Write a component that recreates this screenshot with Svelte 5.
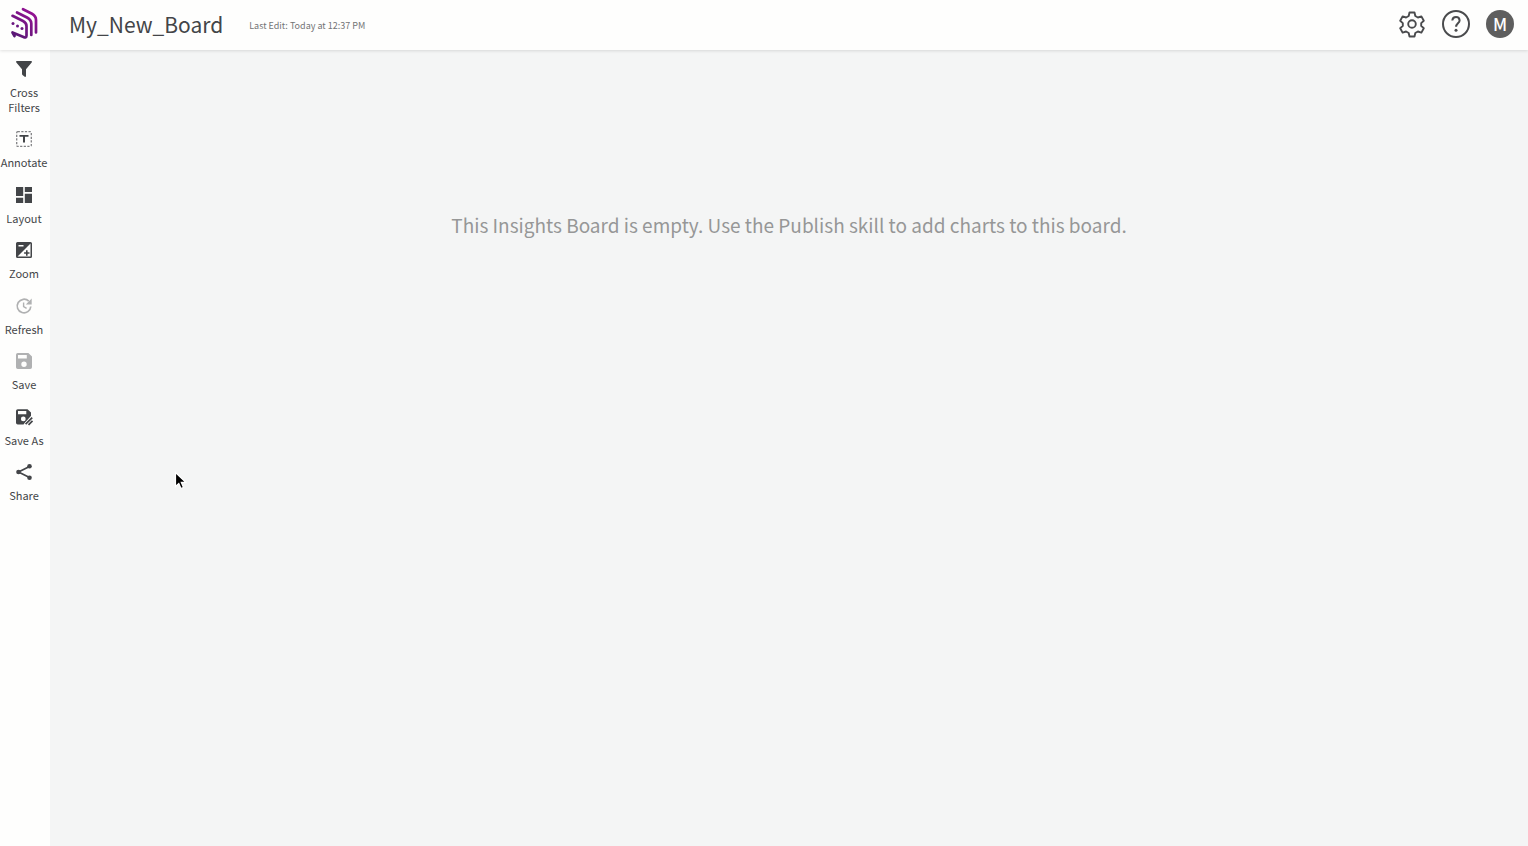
<script lang="ts">
  type Tool = { id: string; label: string; muted?: boolean }

  const tools: Tool[] = [
    { id: 'filter', label: 'Cross Filters' },
    { id: 'annotate', label: 'Annotate' },
    { id: 'layout', label: 'Layout' },
    { id: 'zoom', label: 'Zoom' },
    { id: 'refresh', label: 'Refresh', muted: true },
    { id: 'save', label: 'Save', muted: true },
    { id: 'saveas', label: 'Save As' },
    { id: 'share', label: 'Share' },
  ]
</script>

<div class="app">
  <header>
    <a class="logo" href="/" aria-label="Home">
      <svg viewBox="0 0 30 34" width="30" height="34" fill="none" stroke-width="2.7" stroke-linecap="round" stroke-linejoin="round">
        <defs>
          <linearGradient id="brand" x1="0" y1="34" x2="28" y2="0" gradientUnits="userSpaceOnUse">
            <stop offset="0" stop-color="#4b1a6e" />
            <stop offset="1" stop-color="#a3109b" />
          </linearGradient>
        </defs>
        <g stroke="url(#brand)">
          <path d="M3.500 9.800L14 15Q17.500 16.800 17.500 20V29.500Q17.500 32.500 14.500 31L3.500 26.500L5.500 30" />
          <path d="M8 6.500L18 11.500Q22.300 14 22.300 17.500V29" />
          <path d="M14 3.200L23 7.800Q27 10 27 14V26.500" />
        </g>
        <g fill="#6b1780">
          <circle cx="4" cy="17.500" r="1.500" />
          <circle cx="8.500" cy="20" r="1.500" />
          <circle cx="13" cy="22.500" r="1.500" />
        </g>
      </svg>
    </a>
    <h1>My_New_Board</h1>
    <span class="edited">Last Edit: Today at 12:37 PM</span>
    <div class="actions">
      <button aria-label="Settings">
        <svg viewBox="0 0 28 28" width="28" height="28" fill="none" stroke="#4a4b4d" stroke-width="1.900" stroke-linejoin="round">
          <path d="M11.500 2.500h5l.8 3.500 2.600 1.500 3.500-1.100 2.400 4.300-2.600 2.400v2.800l2.600 2.400-2.400 4.300-3.500-1.100-2.600 1.500-.8 3.500h-5l-.8-3.500-2.600-1.500-3.500 1.100-2.400-4.300 2.600-2.400v-2.800l-2.600-2.400 2.400-4.300 3.500 1.100 2.600-1.500z" />
          <circle cx="14" cy="14" r="3.800" />
        </svg>
      </button>
      <button class="help" aria-label="Help">
        <svg viewBox="0 0 24 24" width="24" height="24" aria-hidden="true">
          <path d="M8.300 8.500Q8.600 5 12 5t3.600 3.400c0 2.700-3.500 3.200-3.500 6.300" fill="none" stroke="#4a4b4d" stroke-width="2" />
          <circle cx="12" cy="18.300" r="1.500" fill="#4a4b4d" />
        </svg>
      </button>
      <button class="avatar" aria-label="Account">M</button>
    </div>
  </header>

  <div class="body">
    <nav aria-label="Board tools">
      <ul>
        {#each tools as tool}
          <li>
            <button class="tool">
              <svg class:muted={tool.muted} viewBox="0 0 16 16" width="16" height="16" fill="currentColor" aria-hidden="true">
                {#if tool.id === 'filter'}
                  <path d="M.6 0h14.800q.9.500.3 1.400L10 8.200V15q-.2 1.200-1.300.8L6.500 14Q6 13.500 6 13V8.200L.3 1.400Q-.3.500.6 0z" />
                {:else if tool.id === 'annotate'}
                  <rect x=".7" y=".7" width="14.600" height="14.600" rx="1" fill="none" stroke="#808183" stroke-width="1.300" stroke-dasharray="2.200 1.400" />
                  <path d="M3.500 4h9v1.800H9V11.500H7V5.800H3.500z" />
                {:else if tool.id === 'layout'}
                  <path d="M0 0h7.200v9H0zM8.800 0H16v5H8.800zM0 10.800h7.200V16H0zM8.800 6.800H16V16H8.800z" />
                {:else if tool.id === 'zoom'}
                  <path fill-rule="evenodd" d="M1.500 0h13Q16 0 16 1.500v13q0 1.500-1.500 1.500h-13Q0 16 0 14.500v-13Q0 0 1.500 0zM14.500 1.500v13h-13zM2.500 3v1.500H7.500V3z" />
                  <path d="M10 8.300h1.600v1.900h1.900v1.600h-1.900v1.900H10v-1.900H8.100v-1.600H10z" />
                {:else if tool.id === 'refresh'}
                  <path d="M12.800 3.200A6.800 6.800 0 1 0 14.800 8.500" fill="none" stroke="currentColor" stroke-width="1.700" />
                  <path d="M15.700.5v6H9.800z" />
                  <path d="M7.600 4.500v4l3 1.800" fill="none" stroke="currentColor" stroke-width="1.400" />
                {:else if tool.id === 'save'}
                  <path fill-rule="evenodd" d="M1.800 0h10.600L16 3.600v10.600q0 1.800-1.800 1.800H1.800Q0 16 0 14.200V1.800Q0 0 1.800 0zM2 2v3.500h8.800V2zM8 8.500a2.700 2.700 0 1 0 0 5.400 2.700 2.700 0 1 0 0-5.400z" />
                {:else if tool.id === 'saveas'}
                  <path fill-rule="evenodd" d="M1.800.2h9.700l3.500 3.300V7L7.500 15.500H1.800Q0 15.500 0 13.700V2Q0 .2 1.800.2zM2 2v3.200h8.300V2zM7.300 7.500a2.400 2.400 0 1 0 0 4.800 2.400 2.400 0 1 0 0-4.800z" />
                  <path d="M9.800 15.500l6.600-7" fill="none" stroke="#fefefd" stroke-width="3.800" />
                  <path d="M9.600 15.200l6.600-6.600M12.500 15.900l4-4" fill="none" stroke="currentColor" stroke-width="1.700" />
                {:else}
                  <path d="M13.500 2.500L2.500 8l11 5.500" fill="none" stroke="currentColor" stroke-width="1.700" />
                  <circle cx="13.500" cy="2.300" r="2.300" />
                  <circle cx="2.500" cy="8" r="2.300" />
                  <circle cx="13.500" cy="13.700" r="2.300" />
                {/if}
              </svg>
              <span>{tool.label}</span>
            </button>
          </li>
        {/each}
      </ul>
    </nav>

    <main>
      <p>This Insights Board is empty. Use the Publish skill to add charts to this board.</p>
      <svg class="cursor" viewBox="0 0 14 20" width="14" height="20" aria-hidden="true">
        <path d="M1.500 1.500v14l3.300-3.100 2.200 5.100 2.500-1.100-2.200-5h4.500z" fill="#000" stroke="#fff" stroke-width="1.200" />
      </svg>
    </main>
  </div>
</div>

<style>
  :global(body) {
    margin: 0;
  }

  .app {
    display: flex;
    flex-direction: column;
    min-height: 100vh;
    background: #fefefd;
    color: #434548;
    font-family: "Noto Sans CJK JP", "Open Sans", sans-serif;
  }

  button {
    padding: 0;
    border: 0;
    background: none;
    color: inherit;
    font-family: inherit;
    cursor: pointer;
  }

  svg {
    display: block;
    overflow: visible;
  }

  header {
    position: relative;
    z-index: 1;
    display: flex;
    align-items: center;
    height: 50px;
    padding: 0 14px 0 9px;
    box-sizing: border-box;
    background: #fefefd;
    box-shadow: 0 1px 3px rgba(0, 0, 0, 0.12);
  }

  .logo {
    margin: 0 30px 4px 0;
  }

  h1 {
    margin: 0 26px 2px 0;
    font-size: 21px;
    font-weight: 400;
    line-height: 30px;
  }

  .edited {
    padding-top: 2px;
    color: #737476;
    font-size: 9px;
    line-height: 14px;
  }

  .actions {
    display: flex;
    gap: 16px;
    margin: 0 0 2px auto;
  }

  .help,
  .avatar {
    width: 28px;
    height: 28px;
    border-radius: 50%;
    box-sizing: border-box;
    text-align: center;
  }

  .help {
    border: 2px solid #4a4b4d;
  }

  .avatar {
    background: #5e5e5e;
    color: #fefefd;
    font-size: 17px;
    font-weight: 500;
    line-height: 26px;
  }

  .body {
    display: flex;
    flex: 1;
  }

  nav {
    width: 50px;
  }

  ul {
    display: flex;
    flex-direction: column;
    justify-content: space-between;
    height: 442px;
    margin: 11px 2px 0 0;
    padding: 0;
    list-style: none;
  }

  .tool {
    display: flex;
    flex-direction: column;
    align-items: center;
    gap: 8px;
    width: 100%;
    font-size: 11px;
    line-height: 15px;
  }

  .muted {
    color: #b0b1b2;
  }

  main {
    position: relative;
    flex: 1;
    background: #f4f5f5;
    text-align: center;
  }

  p {
    margin: 160px 0 0;
    color: #969797;
    font-size: 19px;
    font-weight: 400;
    line-height: 30px;
  }

  .cursor {
    position: absolute;
    top: 421px;
    left: 124px;
  }
</style>
